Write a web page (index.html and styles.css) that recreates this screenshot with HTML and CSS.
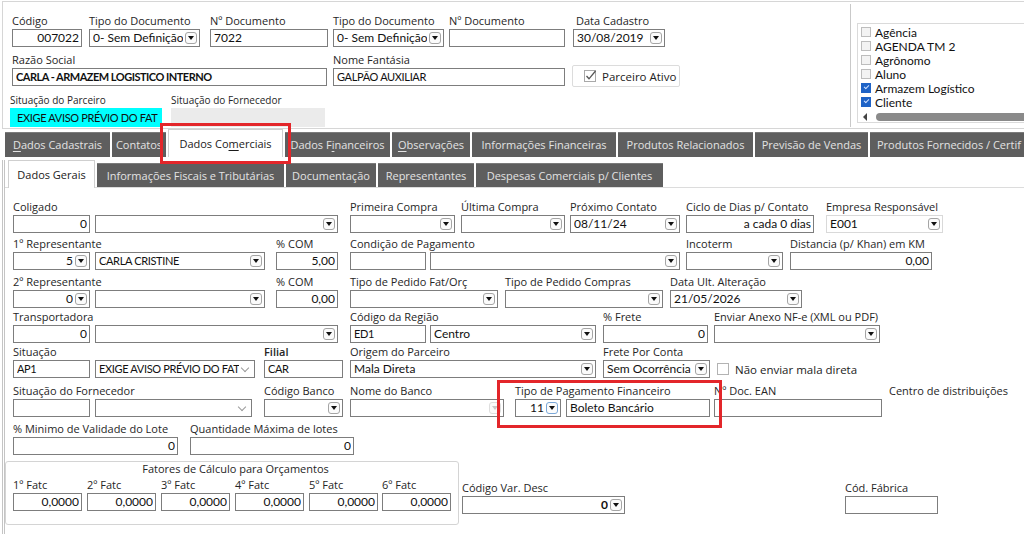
FILE: index.html
```html
<!DOCTYPE html>
<html lang="pt-BR">
<head>
<meta charset="utf-8">
<title>Parceiro</title>
<link rel="stylesheet" href="styles.css">
</head>
<body>
<div class="header">
  <div class="hform">
    <div class="row hr1">
      <div class="fld w70"><span class="lbl">Código</span><div class="in r"><span class="v">007022</span></div></div>
      <div class="fld w111 ml7"><span class="lbl">Tipo do Documento</span><div class="in"><span class="v">0- Sem Definição</span><i class="btn"></i></div></div>
      <div class="fld w118 ml10"><span class="lbl">Nº Documento</span><div class="in"><span class="v">7022</span></div></div>
      <div class="fld w111 ml5"><span class="lbl">Tipo do Documento</span><div class="in"><span class="v">0- Sem Definição</span><i class="btn"></i></div></div>
      <div class="fld w116 ml5"><span class="lbl">Nº Documento</span><div class="in"><span class="v"></span></div></div>
      <div class="fld w92 ml8"><span class="lbl lpad">Data Cadastro</span><div class="in"><span class="v">30/08/2019</span><i class="btn"></i></div></div>
    </div>
    <div class="row hr2">
      <div class="fld w315"><span class="lbl">Razão Social</span><div class="in"><span class="v caps b">CARLA - ARMAZEM LOGISTICO INTERNO</span></div></div>
      <div class="fld w232 ml6"><span class="lbl">Nome Fantásia</span><div class="in"><span class="v caps">GALPÃO AUXILIAR</span></div></div>
      <div class="fld w108 ml7"><span class="lbl"></span>
        <div class="toggle">
          <svg width="15" height="15" viewBox="0 0 15 15"><rect x="1.5" y="2.5" width="11" height="11" fill="#fff" stroke="#a9a9a9"/><path d="M3.5 8 L6 10.8 L12.5 3" fill="none" stroke="#555" stroke-width="1.3"/></svg>
          <span>Parceiro Ativo</span>
        </div>
      </div>
    </div>
    <div class="row hr3">
      <div class="fld w152 mln2"><span class="lbl sm">Situação do Parceiro</span><div class="tag cyan caps">EXIGE AVISO PRÉVIO DO FAT</div></div>
      <div class="fld w154 ml9"><span class="lbl sm">Situação do Fornecedor</span><div class="tag grey"></div></div>
    </div>
  </div>
  <div class="hside">
    <div class="listbox">
      <div class="li"><i class="cb"></i><span>Agência</span></div>
      <div class="li"><i class="cb"></i><span>AGENDA TM 2</span></div>
      <div class="li"><i class="cb"></i><span>Agrônomo</span></div>
      <div class="li"><i class="cb"></i><span>Aluno</span></div>
      <div class="li"><i class="cb on"></i><span>Armazem Logístico</span></div>
      <div class="li"><i class="cb on"></i><span>Cliente</span></div>
      <div class="hscroll"><i class="arrow"></i><span class="thumb"></span></div>
    </div>
  </div>
</div>

<div class="tabs1">
  <div class="tab"><u>D</u>ados Cadastrais</div>
  <div class="tab">Contatos</div>
  <div class="tab active">Dados Co<u>m</u>erciais</div>
  <div class="tab">Dados F<u>i</u>nanceiros</div>
  <div class="tab"><u>O</u>bservações</div>
  <div class="tab">Informações Financeiras</div>
  <div class="tab">Produtos Relacionados</div>
  <div class="tab">Previsão de Vendas</div>
  <div class="tab last">Produtos Fornecidos / Certif</div>
</div>

<div class="page">
  <div class="tabs2">
    <div class="tab active">Dados Gerais</div>
    <div class="tab">Informações Fiscais e Tributárias</div>
    <div class="tab">Documentação</div>
    <div class="tab">Representantes</div>
    <div class="tab">Despesas Comerciais p/ Clientes</div>
  </div>

  <div class="form">
    <div class="row ra">
      <div class="fld w77"><span class="lbl">Coligado</span><div class="in r"><span class="v">0</span></div></div>
      <div class="fld w243 ml5"><span class="lbl"></span><div class="in"><span class="v"></span><i class="btn"></i></div></div>
      <div class="fld w105 ml12"><span class="lbl">Primeira Compra</span><div class="in"><span class="v"></span><i class="btn"></i></div></div>
      <div class="fld w104 ml6"><span class="lbl">Última Compra</span><div class="in"><span class="v"></span><i class="btn"></i></div></div>
      <div class="fld w110 ml5"><span class="lbl">Próximo Contato</span><div class="in"><span class="v">08/11/24</span><i class="btn"></i></div></div>
      <div class="fld w128 ml6"><span class="lbl">Ciclo de Dias p/ Contato</span><div class="in r"><span class="v">a cada 0 dias</span></div></div>
      <div class="fld w117 ml12"><span class="lbl">Empresa Responsável</span><div class="in light"><span class="v">E001</span><i class="btn"></i></div></div>
    </div>

    <div class="row rb">
      <div class="fld w77"><span class="lbl">1º Representante</span><div class="in r"><span class="v">5</span><i class="btn"></i></div></div>
      <div class="fld w170 ml5"><span class="lbl"></span><div class="in"><span class="v caps">CARLA CRISTINE</span><i class="btn"></i></div></div>
      <div class="fld w62 ml11"><span class="lbl">% COM</span><div class="in r"><span class="v">5,00</span></div></div>
      <div class="fld w76 ml12"><span class="lbl">Condição de Pagamento</span><div class="in"><span class="v"></span></div></div>
      <div class="fld w250 ml4"><span class="lbl"></span><div class="in"><span class="v"></span><i class="btn"></i></div></div>
      <div class="fld w97 ml6"><span class="lbl">Incoterm</span><div class="in"><span class="v"></span><i class="btn"></i></div></div>
      <div class="fld w142 ml7"><span class="lbl">Distancia (p/ Khan) em KM</span><div class="in r"><span class="v">0,00</span></div></div>
    </div>

    <div class="row rc">
      <div class="fld w77"><span class="lbl">2º Representante</span><div class="in r"><span class="v">0</span><i class="btn"></i></div></div>
      <div class="fld w170 ml5"><span class="lbl"></span><div class="in"><span class="v"></span><i class="btn"></i></div></div>
      <div class="fld w62 ml11"><span class="lbl">% COM</span><div class="in r"><span class="v">0,00</span></div></div>
      <div class="fld w148 ml12"><span class="lbl">Tipo de Pedido Fat/Orç</span><div class="in"><span class="v"></span><i class="btn"></i></div></div>
      <div class="fld w158 ml7"><span class="lbl">Tipo de Pedido Compras</span><div class="in"><span class="v"></span><i class="btn"></i></div></div>
      <div class="fld w132 ml7"><span class="lbl">Data Ult. Alteração</span><div class="in"><span class="v">21/05/2026</span><i class="btn"></i></div></div>
    </div>

    <div class="row rd">
      <div class="fld w77"><span class="lbl">Transportadora</span><div class="in r"><span class="v">0</span></div></div>
      <div class="fld w243 ml5"><span class="lbl"></span><div class="in"><span class="v"></span><i class="btn"></i></div></div>
      <div class="fld w76 ml12"><span class="lbl">Código da Região</span><div class="in"><span class="v caps">ED1</span></div></div>
      <div class="fld w166 ml4"><span class="lbl"></span><div class="in"><span class="v">Centro</span><i class="btn"></i></div></div>
      <div class="fld w105 ml7"><span class="lbl">% Frete</span><div class="in r"><span class="v">0</span></div></div>
      <div class="fld w166 ml6"><span class="lbl">Enviar Anexo NF-e (XML ou PDF)</span><div class="in"><span class="v"></span><i class="btn"></i></div></div>
    </div>

    <div class="row re">
      <div class="fld w77"><span class="lbl">Situação</span><div class="in"><span class="v caps">AP1</span></div></div>
      <div class="fld w160 ml5"><span class="lbl"></span><div class="in"><span class="v caps">EXIGE AVISO PRÉVIO DO FAT</span><i class="chev"></i></div></div>
      <div class="fld w79 ml9"><span class="lbl semi">Filial</span><div class="in"><span class="v caps">CAR</span></div></div>
      <div class="fld w246 ml7"><span class="lbl">Origem do Parceiro</span><div class="in"><span class="v">Mala Direta</span><i class="btn"></i></div></div>
      <div class="fld w107 ml7"><span class="lbl">Frete Por Conta</span><div class="in"><span class="v">Sem Ocorrência</span><i class="btn"></i></div></div>
      <div class="fld ml7"><span class="lbl"></span><div class="chkline"><i class="cbx"></i><span>Não enviar mala direta</span></div></div>
    </div>

    <div class="row rf">
      <div class="fld w77"><span class="lbl">Situação do Fornecedor</span><div class="in"><span class="v"></span></div></div>
      <div class="fld w157 ml5"><span class="lbl"></span><div class="in"><span class="v"></span><i class="chev"></i></div></div>
      <div class="fld w79 ml12"><span class="lbl">Código Banco</span><div class="in"><span class="v"></span><i class="btn"></i></div></div>
      <div class="fld w154 ml7"><span class="lbl">Nome do Banco</span><div class="in"><span class="v"></span><i class="btn faint"></i></div></div>
      <div class="fld w46 ml11"><span class="lbl">Tipo de Pagamento Financeiro</span><div class="in r"><span class="v">11</span><i class="btn focus"></i></div></div>
      <div class="fld w144 ml5"><span class="lbl"></span><div class="in"><span class="v">Boleto Bancário</span></div></div>
      <div class="fld w168 ml4"><span class="lbl">Nº Doc. EAN</span><div class="in"><span class="v"></span></div></div>
      <div class="fld ml7"><span class="lbl">Centro de distribuições</span></div>
    </div>

    <div class="row rg">
      <div class="fld w165"><span class="lbl">% Minimo de Validade do Lote</span><div class="in r"><span class="v">0</span></div></div>
      <div class="fld w164 ml12"><span class="lbl">Quantidade Máxima de lotes</span><div class="in r"><span class="v">0</span></div></div>
    </div>

    <div class="bottom">
      <div class="group">
        <div class="gtitle">Fatores de Cálculo para Orçamentos</div>
        <div class="row grow">
          <div class="fld w69"><span class="lbl">1º Fatc</span><div class="in r"><span class="v">0,0000</span></div></div>
          <div class="fld w69 ml5"><span class="lbl">2º Fatc</span><div class="in r"><span class="v">0,0000</span></div></div>
          <div class="fld w69 ml5"><span class="lbl">3º Fatc</span><div class="in r"><span class="v">0,0000</span></div></div>
          <div class="fld w69 ml5"><span class="lbl">4º Fatc</span><div class="in r"><span class="v">0,0000</span></div></div>
          <div class="fld w69 ml5"><span class="lbl">5º Fatc</span><div class="in r"><span class="v">0,0000</span></div></div>
          <div class="fld w69 ml4"><span class="lbl">6º Fatc</span><div class="in r"><span class="v">0,0000</span></div></div>
        </div>
      </div>
      <div class="fld w163 ml3 side"><span class="lbl">Código Var. Desc</span><div class="in r"><span class="v b">0</span><i class="btn"></i></div></div>
      <div class="fld w93 ml220 side"><span class="lbl">Cód. Fábrica</span><div class="in"><span class="v"></span></div></div>
    </div>
  </div>
</div>

<div class="hl hl1"></div>
<div class="hl hl2"></div>
</body>
</html>
```

FILE: styles.css
```css
* { box-sizing: border-box; }
html, body { margin: 0; padding: 0; background: #fff; }
body {
  width: 1024px;
  height: 534px;
  overflow: hidden;
  position: relative;
  font-family: "Open Sans", "Noto Sans", sans-serif;
  font-size: 11px;
  color: #1f1f1f;
}

/* ---------- generic field pieces ---------- */
.row { display: flex; align-items: flex-start; }
.fld { display: flex; flex-direction: column; flex: none; }
.lbl {
  display: block;
  height: 14px;
  line-height: 14px;
  margin-bottom: 1px;
  white-space: nowrap;
  color: #262626;
}
.lbl.sm { font-size: 10px; height: 12px; line-height: 12px; margin-bottom: 2px; }
.lbl.semi { font-weight: 600; }
.lbl.lpad { padding-left: 3px; }

.in {
  display: flex;
  align-items: center;
  height: 18px;
  border: 1px solid #7d7d7d;
  background: #fff;
  padding: 0 2px 0 3px;
  font-family: Lato, "Open Sans", sans-serif;
  font-size: 12px;
  color: #111;
}
.in.light { border-color: #d9d9d9; }
.in .v { flex: 1; min-width: 0; white-space: nowrap; overflow: hidden; line-height: 16px; }
.in.r .v { text-align: right; }
.caps { font-size: 11px; letter-spacing: -0.35px; }
.caps.b { letter-spacing: -0.5px; }
.b { font-weight: 700; }

.btn {
  flex: none;
  width: 12px;
  height: 12px;
  margin-left: 2px;
  border: 1px solid #a5a5a5;
  border-radius: 3px;
  background: #fbfbfb;
  display: flex;
  align-items: center;
  justify-content: center;
}
.btn::after {
  content: "";
  border-left: 3px solid transparent;
  border-right: 3px solid transparent;
  border-top: 4px solid #111;
}
.btn.faint { border-color: #dedede; }
.btn.faint::after { border-top-color: #c8c8c8; }
.btn.focus { border-color: #7aa7d8; }

.chev {
  flex: none;
  width: 12px;
  height: 8px;
  margin-right: 1px;
  position: relative;
}
.chev::before {
  content: "";
  position: absolute;
  left: 3px;
  top: 0;
  width: 5px;
  height: 5px;
  border-right: 1px solid #9a9a9a;
  border-bottom: 1px solid #9a9a9a;
  transform: rotate(45deg);
}

/* widths and gaps */
.w46 { width: 46px; } .w62 { width: 62px; } .w69 { width: 69px; } .w70 { width: 70px; }
.w76 { width: 76px; } .w77 { width: 77px; } .w79 { width: 79px; } .w92 { width: 92px; }
.w93 { width: 93px; } .w97 { width: 97px; } .w104 { width: 104px; } .w105 { width: 105px; }
.w107 { width: 107px; } .w108 { width: 108px; } .w110 { width: 110px; } .w111 { width: 111px; }
.w116 { width: 116px; } .w117 { width: 117px; } .w118 { width: 118px; } .w128 { width: 128px; }
.w132 { width: 132px; } .w142 { width: 142px; } .w144 { width: 144px; } .w148 { width: 148px; }
.w152 { width: 152px; } .w154 { width: 154px; } .w157 { width: 157px; } .w158 { width: 158px; }
.w160 { width: 160px; } .w163 { width: 163px; } .w164 { width: 164px; } .w165 { width: 165px; }
.w166 { width: 166px; } .w168 { width: 168px; } .w170 { width: 170px; } .w232 { width: 232px; }
.w243 { width: 243px; } .w246 { width: 246px; } .w250 { width: 250px; } .w315 { width: 315px; }
.ml3 { margin-left: 3px; } .ml4 { margin-left: 4px; } .ml5 { margin-left: 5px; } .ml6 { margin-left: 6px; }
.ml7 { margin-left: 7px; } .ml8 { margin-left: 8px; } .ml9 { margin-left: 9px; } .ml10 { margin-left: 10px; }
.ml11 { margin-left: 11px; } .ml12 { margin-left: 12px; } .ml220 { margin-left: 220px; } .mln2 { margin-left: -2px; }

/* ---------- header ---------- */
.header {
  display: flex;
  height: 128px;
  margin: 1px 0 0 2px;
  border-top: 1px solid #d6d6d6;
  border-left: 1px solid #d6d6d6;
  border-bottom: 1px solid #d6d6d6;
}
.hform { flex: 1; padding: 12px 0 0 9px; }
.hr2 { margin-top: 6px; }
.hr3 { margin-top: 7px; }

.toggle {
  height: 22px;
  margin-top: -3px;
  border: 1px solid #dcdcdc;
  border-radius: 2px;
  background: #fff;
  display: flex;
  align-items: center;
  padding-left: 10px;
  font-size: 11.5px;
  color: #222;
}
.toggle svg { margin-right: 4px; margin-top: -2px; }

.tag {
  height: 19px;
  line-height: 19px;
  padding-left: 7px;
  font-family: Lato, "Open Sans", sans-serif;
  color: #111;
  white-space: nowrap;
  overflow: hidden;
}
.tag.cyan { background: #00ffff; }
.tag.grey { background: #ebebeb; }

.hside {
  flex: none;
  width: 174px;
  margin: 2px 0 1px;
  border-left: 1px solid #c9c9c9;
  padding: 19px 0 0 6px;
}
.listbox {
  width: 172px;
  height: 100px;
  border: 1px solid #dadada;
  background: #fff;
  padding-top: 1px;
  font-family: Lato, "Open Sans", sans-serif;
  font-size: 12px;
  color: #111;
}
.li { display: flex; align-items: center; height: 14px; padding-left: 3px; white-space: nowrap; }
.li span { margin-left: 4px; }
.cb {
  width: 10px;
  height: 10px;
  border: 1px solid #bdbdbd;
  background: #f3f3f3;
  flex: none;
  position: relative;
}
.cb.on { background: #1f63c6; border-color: #1f63c6; }
.cb.on::after {
  content: "";
  position: absolute;
  left: 2px;
  top: 1px;
  width: 4px;
  height: 2px;
  border-left: 1px solid #cfe0ff;
  border-bottom: 1px solid #cfe0ff;
  transform: rotate(-45deg);
}
.hscroll { display: flex; align-items: center; height: 14px; padding-left: 5px; margin-top: 1px; }
.arrow {
  border-top: 4px solid transparent;
  border-bottom: 4px solid transparent;
  border-right: 4px solid #444;
  margin-right: 9px;
}
.thumb { flex: 1; height: 8px; background: #8a8a8a; border-radius: 4px 0 0 4px; }

/* ---------- tabs ---------- */
.tabs1 {
  display: grid;
  grid-template-columns: 105px 54px 115px 105px 78px 144px 135px 113px 1fr;
  column-gap: 2px;
  align-items: end;
  height: 28px;
  padding-left: 5px;
}
.tab {
  height: 25px;
  line-height: 24px;
  background: #5e5e5e;
  border-top: 1px solid #7b7b7b;
  color: #e3e3e3;
  text-align: center;
  white-space: nowrap;
  overflow: hidden;
  font-size: 11px;
}
.tab u { text-decoration-thickness: 1px; text-underline-offset: 2px; }
.tab.active {
  height: 28px;
  line-height: 28px;
  background: #fff;
  color: #1a1a1a;
  border: 1px solid #cfcfcf;
  border-bottom: none;
}
.tab.last { text-align: left; padding-left: 7px; }

.page {
  margin-left: 2px;
  border-left: 3px double #c4c4c4;
  height: 377px;
}
.tabs2 {
  display: grid;
  grid-template-columns: 87px 187px 90px 96px 187px;
  column-gap: 2px;
  align-items: end;
  height: 28px;
  margin-top: 3px;
  padding-left: 3px;
  border-bottom: 1px solid #dcdcdc;
}
.tabs2 .tab { height: 24px; line-height: 23px; }
.tabs2 .tab.active { height: 28px; line-height: 27px; margin-bottom: -1px; }

/* ---------- main form ---------- */
.form { padding: 12px 0 0 8px; }
.rb { margin-top: 4px; }
.rc { margin-top: 5px; }
.rd { margin-top: 2px; }
.re { margin-top: 2px; }
.rf { margin-top: 6px; }
.rg { margin-top: 5px; }

.chkline {
  display: flex;
  align-items: center;
  height: 18px;
  font-size: 11.5px;
  color: #222;
  white-space: nowrap;
}
.cbx {
  width: 12px;
  height: 12px;
  border: 1px solid #b3b3b3;
  background: #fff;
  margin-right: 6px;
}

.bottom { display: flex; align-items: flex-start; margin-top: 6px; }
.group {
  flex: none;
  width: 454px;
  height: 64px;
  margin-left: -8px;
  border: 1px solid #d4d4d4;
  border-radius: 3px;
  padding-left: 7px;
}
.gtitle { height: 14px; line-height: 14px; text-align: center; color: #262626; }
.grow { margin-top: 2px; }
.side { margin-top: 20px; }

/* ---------- highlight overlays ---------- */
.hl { position: absolute; border: 3px solid #e3262a; pointer-events: none; }
.hl1 { left: 160px; top: 123px; width: 131px; height: 41px; }
.hl2 { left: 497px; top: 380px; width: 225px; height: 48px; }
```
